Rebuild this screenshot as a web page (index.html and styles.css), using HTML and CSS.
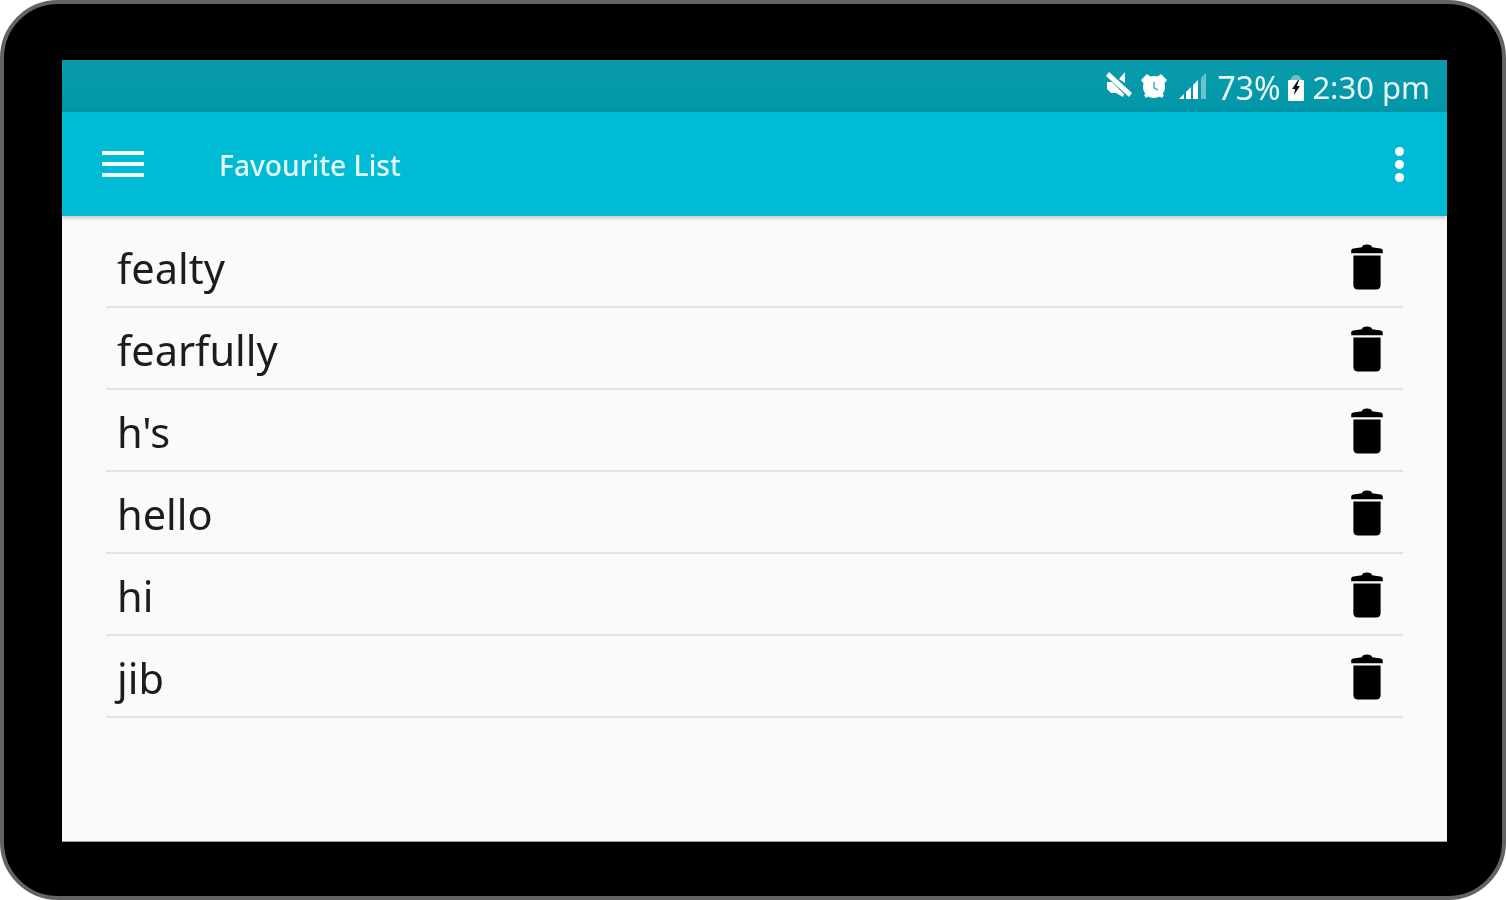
FILE: index.html
```html
<!DOCTYPE html>
<html lang="en">
<head>
<meta charset="utf-8">
<title>Favourite List</title>
<link rel="stylesheet" href="styles.css">
</head>
<body>
<svg class="defs" width="0" height="0" aria-hidden="true">
  <symbol id="trash" viewBox="0 0 32 46">
    <path d="M11 3.2C11 1.4 13 .4 16 .4s5 1 5 2.8l8.6 1.2c1.4.2 2.2 1 2.2 2.2v2.6H.2V6.6c0-1.2.8-2 2.2-2.2z"/>
    <path d="M2.4 11.6h27.2v29.6c0 2.8-1.8 4.4-4.4 4.4H6.8c-2.6 0-4.4-1.6-4.4-4.4z"/>
  </symbol>
</svg>
<div class="device">
  <main class="screen">
    <div class="statusbar">
      <svg class="ic-mute" viewBox="0 0 26 26"><path d="M3 0l23 21-3 4L0 4z" fill="#fff"/><path d="M13 7l6-7v11z" fill="#fff"/><path d="M1 10l5 0 12 12-1 3-7-4H5l-4-4z" fill="#fff"/></svg>
      <svg class="ic-alarm" viewBox="0 0 26 26"><circle cx="13" cy="14" r="11" fill="#fff"/><path d="M0 7l6-6 4 3-7 7zM26 7l-6-6-4 3 7 7zM3 22l3-2 2 3-3 2zM23 22l-3-2-2 3 3 2z" fill="#fff"/><path d="M13 9v6l4 2" stroke="#6cc3cd" stroke-width="2" fill="none"/></svg>
      <svg class="ic-signal" viewBox="0 0 28 26"><path d="M0 26h5v-5z" fill="#fff"/><path d="M7 26h5v-12l-5 5z" fill="#fff"/><path d="M14 26h5V7l-5 5z" fill="#fff"/><path d="M22 26h5V0l-5 5z" fill="#fff" opacity=".4"/></svg>
      <span class="pct">73%</span>
      <svg class="ic-batt" viewBox="0 0 18 27"><path d="M3 8c0-3 2-7 6-7s6 4 6 7z" fill="#fff" opacity=".4"/><rect x="1" y="6" width="16" height="21" rx="1" fill="#fff"/><path d="M11 6L5 15h3l-1 6 6-9h-3l2-6z" fill="#111"/></svg>
      <span class="time">2:30 pm</span>
    </div>
    <header class="toolbar">
      <div class="burger"><i></i><i></i><i></i></div>
      <h1 class="title">Favourite List</h1>
      <div class="kebab"><i></i><i></i><i></i></div>
    </header>
    <ul class="list">
      <li class="row"><span class="word">fealty</span><svg class="trash"><use href="#trash"/></svg></li>
      <li class="row"><span class="word">fearfully</span><svg class="trash"><use href="#trash"/></svg></li>
      <li class="row"><span class="word">h's</span><svg class="trash"><use href="#trash"/></svg></li>
      <li class="row"><span class="word">hello</span><svg class="trash"><use href="#trash"/></svg></li>
      <li class="row"><span class="word">hi</span><svg class="trash"><use href="#trash"/></svg></li>
      <li class="row"><span class="word">jib</span><svg class="trash"><use href="#trash"/></svg></li>
    </ul>
  </main>
</div>
</body>
</html>
```

FILE: styles.css
```css
* { box-sizing: border-box; }
html, body { margin: 0; padding: 0; background: #fff; }
body { width: 1506px; height: 900px; overflow: hidden; font-family: "Noto Sans", sans-serif; }
.defs { position: absolute; }

.device {
  width: 1506px;
  height: 900px;
  background: #000;
  border: 4px solid #636363;
  border-radius: 58px;
  padding: 56px 55px 54px 58px;
}
.screen {
  width: 1385px;
  height: 782px;
  background: #fafafa;
  display: flex;
  flex-direction: column;
  border-bottom: 1px solid #9a9a9a;
}

.statusbar {
  height: 52px;
  flex: none;
  background: linear-gradient(#0a9cac, #0296a8);
  display: flex;
  align-items: center;
  justify-content: flex-end;
  padding: 2px 17px 0 0;
  color: #e9f6f7;
  font-family: "Noto Sans", sans-serif;
  font-size: 31px;
  filter: blur(.6px);
}
.ic-mute { width: 26px; height: 26px; margin-right: 9px; margin-top: -4px; }
.ic-alarm { width: 26px; height: 26px; margin-right: 12px; margin-top: -3px; }
.ic-signal { width: 28px; height: 26px; margin-right: 10px; margin-top: -2px; }
.pct { font-size: 32px; letter-spacing: -.1px; }
.ic-batt { width: 18px; height: 27px; margin: 0 7px 0 7px; }

.toolbar {
  height: 104px;
  flex: none;
  background: #00bbd6;
  display: flex;
  align-items: center;
  padding: 0 40px;
  box-shadow: 0 2px 4px rgba(0, 0, 0, .22);
  position: relative;
  color: #e6f8fb;
}
.burger { display: flex; flex-direction: column; gap: 7px; width: 42px; margin-top: -1px; }
.burger i { display: block; height: 4px; background: #f2fcfd; }
.title {
  margin: 2px 0 0 75px;
  flex: 1;
  font-family: "Noto Sans", sans-serif;
  font-size: 28.2px;
  font-weight: 500;
  line-height: 40px;
  filter: blur(.5px);
}
.kebab { display: flex; flex-direction: column; gap: 4px; margin-right: 3px; }
.kebab i { display: block; width: 9px; height: 9px; border-radius: 50%; background: #fff; }

.list { list-style: none; margin: 0; padding: 10px 44px 0; }
.row {
  height: 82px;
  display: flex;
  align-items: center;
  justify-content: space-between;
  padding: 0 20px 0 11px;
  border-bottom: 2px solid #e2e2e2;
}
.word {
  font-size: 41.5px;
  line-height: 56px;
  margin-top: 4px;
  color: #1c1c1c;
  filter: blur(.5px);
}
.trash { width: 32px; height: 46px; fill: #000; filter: blur(.5px); margin-top: 1px; }
```
